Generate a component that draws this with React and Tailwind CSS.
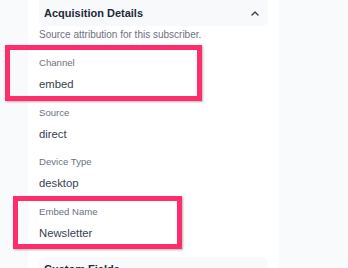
import React from "react";

const fields = [
  { label: "Channel", value: "embed" },
  { label: "Source", value: "direct" },
  { label: "Device Type", value: "desktop" },
  { label: "Embed Name", value: "Newsletter" },
];

const ChevronUp = () => (
  <svg width="8" height="5" viewBox="0 0 8 5" fill="none">
    <path d="M1 4l3-3 3 3" stroke="#374151" strokeWidth="1.4" strokeLinecap="round" strokeLinejoin="round" />
  </svg>
);

const App = () => {
  return (
    <div
      className="relative flex h-[268px] w-[348px] overflow-hidden bg-[#f9fafb]"
      style={{ fontFamily: "'Liberation Sans', Arial, sans-serif" }}
    >
      <div className="w-[28px] shrink-0" />
      <div className="w-[251px] shrink-0 bg-white px-[11px]">
        <div className="flex h-[26px] items-center justify-between rounded-b-md bg-[#f8f9fb] pl-[5px] pr-[9px]">
          <span className="text-[11px] font-bold text-[#1f2937]">Acquisition Details</span>
          <ChevronUp />
        </div>
        <p className="mt-[1.5px] text-[10px] leading-[14px] text-[#6b7280]">
          Source attribution for this subscriber.
        </p>
        <div className="mt-[14.5px] flex flex-col gap-[13.5px]">
          {fields.map((f) => (
            <div key={f.label} className="flex flex-col gap-[6px]">
              <span className="text-[9.6px] leading-[14px] text-[#6b7280]">{f.label}</span>
              <span className="text-[11.3px] leading-[16px] text-[#374151]">{f.value}</span>
            </div>
          ))}
        </div>
        <div className="mt-[16px] flex h-[26px] items-center justify-between rounded-t-md bg-[#f8f9fb] pl-[5px] pr-[9px]">
          <span className="text-[11px] font-bold text-[#1f2937]">Custom Fields</span>
        </div>
      </div>
      <div className="flex-1" />

      {/* annotation highlights */}
      <div className="absolute left-[5px] top-[45px] h-[56px] w-[197px] border-[5px] border-[#ff2d6b] shadow-[1px_1px_2px_rgba(0,0,0,0.3)]" />
      <div className="absolute left-[13px] top-[196px] h-[53px] w-[169px] border-[5px] border-[#ff2d6b] shadow-[1px_1px_2px_rgba(0,0,0,0.3)]" />
    </div>
  );
};

export default App;
